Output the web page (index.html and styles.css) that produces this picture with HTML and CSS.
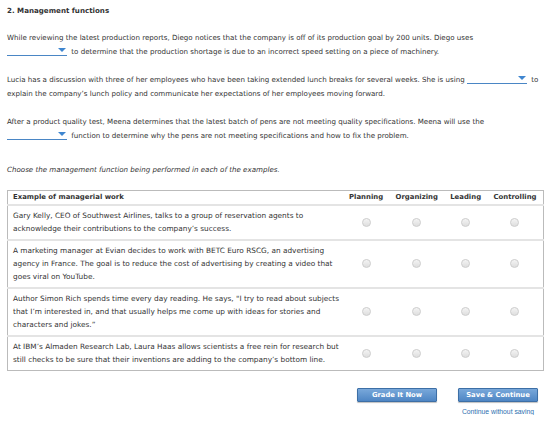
FILE: index.html
```html
<!DOCTYPE html>
<html lang="en">
<head>
    <meta charset="UTF-8">
    <title>Management functions</title>
    <link rel="stylesheet" href="styles.css">
</head>
<body>
    <div class="question">
        <h2 class="q-title">2. Management functions</h2>

        <p class="q-text">While reviewing the latest production reports, Diego notices that the company is off of its production goal by 200 units. Diego uses<br>
            <span class="pick"></span> to determine that the production shortage is due to an incorrect speed setting on a piece of machinery.</p>

        <p class="q-text">Lucia has a discussion with three of her employees who have been taking extended lunch breaks for several weeks. She is using <span class="pick"></span> to<br>
            explain the company’s lunch policy and communicate her expectations of her employees moving forward.</p>

        <p class="q-text">After a product quality test, Meena determines that the latest batch of pens are not meeting quality specifications. Meena will use the<br>
            <span class="pick"></span> function to determine why the pens are not meeting specifications and how to fix the problem.</p>

        <p class="q-hint">Choose the management function being performed in each of the examples.</p>

        <table class="grid">
            <thead>
                <tr>
                    <th class="ex">Example of managerial work</th>
                    <th>Planning</th>
                    <th>Organizing</th>
                    <th>Leading</th>
                    <th>Controlling</th>
                </tr>
            </thead>
            <tbody>
                <tr>
                    <td class="ex">Gary Kelly, CEO of Southwest Airlines, talks to a group of reservation agents to<br>acknowledge their contributions to the company’s success.</td>
                    <td><span class="radio"></span></td>
                    <td><span class="radio"></span></td>
                    <td><span class="radio"></span></td>
                    <td><span class="radio"></span></td>
                </tr>
                <tr>
                    <td class="ex">A marketing manager at Evian decides to work with BETC Euro RSCG, an advertising<br>agency in France. The goal is to reduce the cost of advertising by creating a video that<br>goes viral on YouTube.</td>
                    <td><span class="radio"></span></td>
                    <td><span class="radio"></span></td>
                    <td><span class="radio"></span></td>
                    <td><span class="radio"></span></td>
                </tr>
                <tr>
                    <td class="ex">Author Simon Rich spends time every day reading. He says, "I try to read about subjects<br>that I’m interested in, and that usually helps me come up with ideas for stories and<br>characters and jokes.”</td>
                    <td><span class="radio"></span></td>
                    <td><span class="radio"></span></td>
                    <td><span class="radio"></span></td>
                    <td><span class="radio"></span></td>
                </tr>
                <tr>
                    <td class="ex">At IBM’s Almaden Research Lab, Laura Haas allows scientists a free rein for research but<br>still checks to be sure that their inventions are adding to the company’s bottom line.</td>
                    <td><span class="radio"></span></td>
                    <td><span class="radio"></span></td>
                    <td><span class="radio"></span></td>
                    <td><span class="radio"></span></td>
                </tr>
            </tbody>
        </table>

        <div class="actions">
            <button class="btn">Grade It Now</button>
            <div class="save">
                <button class="btn">Save &amp; Continue</button>
                <a class="skip" href="#">Continue without saving</a>
            </div>
        </div>
    </div>
</body>
</html>
```

FILE: styles.css
```css
body {
    margin: 0;
    background: #fff;
    font-family: "DejaVu Sans", Verdana, sans-serif;
    font-size: 7.1px;
    color: #333;
}
.question {
    padding: 6px 16px 0 7px;
}
.q-title {
    font-size: 7.1px;
    font-weight: bold;
    margin: 0 0 15px;
    line-height: 10px;
}
.q-text {
    margin: 0 0 14px;
    line-height: 14px;
    white-space: nowrap;
}
.pick {
    display: inline-block;
    position: relative;
    width: 60px;
    height: 9px;
    margin-right: 2px;
    border-bottom: 1px solid #4a86c5;
    vertical-align: -2px;
}
.pick::after {
    content: "";
    position: absolute;
    right: 1px;
    top: 2px;
    border-left: 4px solid transparent;
    border-right: 4px solid transparent;
    border-top: 4px solid #3f86d0;
}
.q-hint {
    font-style: italic;
    margin: 20px 0 13px;
    line-height: 14px;
}
.grid {
    width: 537px;
    border-collapse: collapse;
    border: 1px solid #bbb;
}
.grid th {
    font-size: 6.9px;
    font-weight: bold;
    text-align: center;
    padding: 1px 4px 1px;
    line-height: 11px;
    white-space: nowrap;
}
.grid td {
    padding: 3px 4px 4px;
    line-height: 13px;
    font-size: 7.35px;
    text-align: center;
    border-top: 2px solid #e4e4e4;
}
.grid .ex {
    text-align: left;
    padding-left: 5px;
    width: 325px;
    white-space: nowrap;
}
.radio {
    display: inline-block;
    width: 7px;
    height: 7px;
    border-radius: 50%;
    border: 1px solid #cfcfcf;
    background: linear-gradient(#f4f4f4, #dedede);
    vertical-align: middle;
}
.actions {
    display: flex;
    justify-content: flex-end;
    gap: 21px;
    padding: 17px 6px 0 0;
}
.btn {
    width: 80px;
    height: 14px;
    padding: 0;
    font-family: "DejaVu Sans", Verdana, sans-serif;
    font-size: 6.8px;
    font-weight: bold;
    color: #fff;
    border: 1px solid #3d6fa6;
    border-radius: 1px;
    background: linear-gradient(#79a8da, #4f86c4);
    box-shadow: 0 1px 1px rgba(0, 0, 0, 0.25);
    cursor: pointer;
}
.save {
    display: flex;
    flex-direction: column;
    align-items: center;
}
.skip {
    margin-top: 6px;
    font-family: "Liberation Sans", Arial, sans-serif;
    font-size: 6.8px;
    color: #2d6fb0;
    text-decoration: none;
}
```
